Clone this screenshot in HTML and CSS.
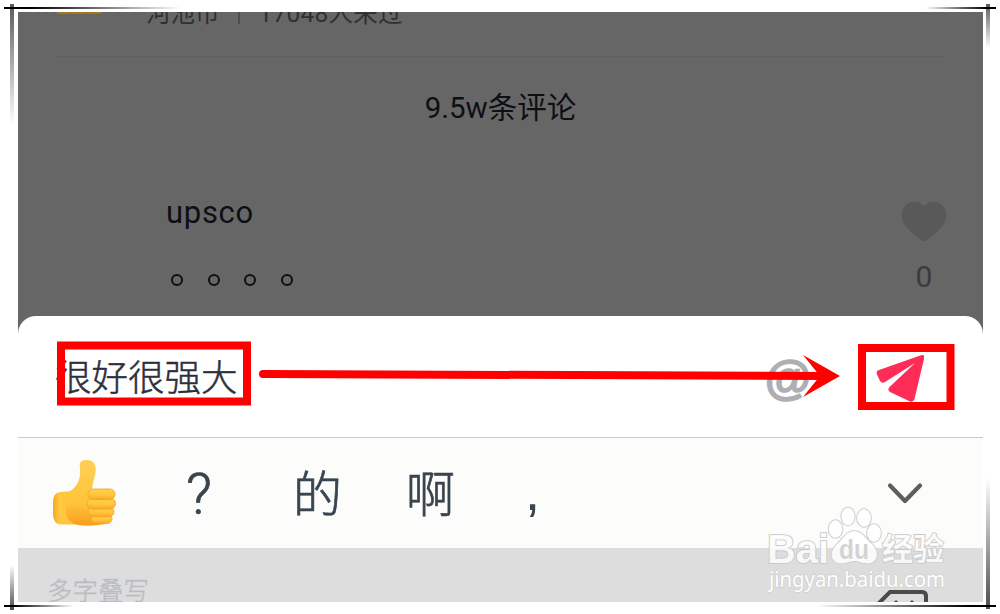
FILE: index.html
```html
<!DOCTYPE html>
<html lang="zh-CN">
<head>
<meta charset="UTF-8">
<meta name="viewport" content="width=device-width, initial-scale=1.0">
<link rel="stylesheet" href="styles.css">
<title>评论</title>
</head>
<body>
<div class="frame">
<div class="screen">

<div class="comments">
<div class="place">
<span class="badge"></span>
<span class="place-name">河池市</span>
<span class="bar"></span>
<span class="place-count">17048人来过</span>
</div>
<h2 class="total">9.5w条评论</h2>
<div class="comment">
<div class="comment-body">
<p class="user">upsco</p>
<p class="dots"><i></i><i></i><i></i><i></i></p>
</div>
<div class="like">
<svg width="46" height="42" viewBox="0 0 46 42"><path d="M23 5C18 0 9 -1 4 5C-1 11 0 19 4 24C8 30 14 34 20 39Q23 41.500 26 39C32 34 38 30 42 24C46 19 47 11 42 5C37 -1 28 0 23 5Z" fill="#595959"/></svg>
<span>0</span>
</div>
</div>
</div>

<div class="sheet">
<div class="message">很好很强大</div>
<span class="at">@</span>
<svg class="send" width="50" height="50" viewBox="0 0 50 50"><path d="M5 17L47 2.200Q51.500 1 50 6L40.500 46Q39 50 35 48L16 39Q13 37 15.500 34L41 10L11 29Q8 31 6 28L2.800 21Q2 18 5 17Z" fill="#ff2c58"/></svg>
</div>

<div class="suggest">
<svg class="thumb" width="66" height="68" viewBox="0 0 66 68">
<defs>
<linearGradient id="skin" x1="0" y1="0" x2="0" y2="1"><stop offset="0" stop-color="#ffcf55"/><stop offset=".65" stop-color="#ffc43a"/><stop offset="1" stop-color="#f99c20"/></linearGradient>
<linearGradient id="wrist" x1="0" y1="0" x2="1" y2="0"><stop offset="0" stop-color="#f9a51f"/><stop offset=".3" stop-color="#ffc942"/><stop offset="1" stop-color="#ffc03a"/></linearGradient>
<linearGradient id="finger" x1="0" y1="0" x2="0" y2="1"><stop offset="0" stop-color="#ffd050"/><stop offset=".6" stop-color="#ffc53a"/><stop offset="1" stop-color="#fba828"/></linearGradient>
</defs>
<path d="M8 33Q1 34 1 43V55Q1 65 9 65.500H23V32Z" fill="url(#wrist)"/>
<path d="M14 35C24 29 29 22 28 10C27 3 29 1 35 1C43 1 45 8 43 16C41 24 40 28 40 31L51 34L53 65Q38 68 26 66Q16 64 14 54Z" fill="url(#skin)"/>
<g fill="url(#finger)" stroke="#f5a024" stroke-width=".8">
<rect x="39" y="55" width="21" height="9.500" rx="4.700"/>
<rect x="36" y="48" width="26" height="9.500" rx="4.700"/>
<rect x="35" y="39" width="28.500" height="11" rx="5.500"/>
<rect x="36" y="30" width="27" height="10.500" rx="5.200"/>
</g>
</svg>
<span class="word q">?</span>
<span class="word de">的</span>
<span class="word a">啊</span>
<span class="word comma">,</span>
<svg class="chevron" width="36" height="22" viewBox="0 0 36 22"><path d="M3 3.500L18 19L33 3.500" fill="none" stroke="#5e5e5e" stroke-width="4.200" stroke-linecap="round" stroke-linejoin="round"/></svg>
</div>

<div class="keyboard">
<span class="hint">多字叠写</span>
<svg class="backspace" width="54" height="28" viewBox="0 0 54 28"><path d="M2 17L14 5H46Q50 5 50 9V26" fill="none" stroke="#4b4b4b" stroke-width="4"/><path d="M19 14L29 24M37 14L27 24" stroke="#4b4b4b" stroke-width="3"/></svg>
</div>
</div>

<!-- arrow and boxes over the screen -->
<svg class="marks" width="1000" height="614" viewBox="0 0 1000 614">
<defs>
<linearGradient id="right"><stop offset="0"/><stop offset=".15"/><stop offset="1" stop-opacity="0"/></linearGradient>
<linearGradient id="left"><stop offset="0" stop-opacity="0"/><stop offset=".85"/><stop offset="1"/></linearGradient>
<linearGradient id="down" x1="0" y1="0" x2="0" y2="1"><stop offset="0" stop-opacity=".65"/><stop offset="1" stop-opacity="0"/></linearGradient>
<linearGradient id="up" x1="0" y1="0" x2="0" y2="1"><stop offset="0" stop-opacity="0"/><stop offset="1" stop-opacity=".7"/></linearGradient>
</defs>
<rect x="4" y="7" width="178" height="2" fill="url(#right)"/>
<rect x="10" y="4" width="4" height="120" fill="url(#down)"/>
<rect x="925" y="7" width="71" height="2" fill="url(#left)"/>
<rect x="986" y="4" width="4" height="44" fill="url(#down)"/>
<rect x="4" y="605" width="70" height="2" fill="url(#right)"/>
<rect x="10" y="565" width="4" height="45" fill="url(#up)"/>
<rect x="815" y="605" width="181" height="2" fill="url(#left)"/>
<rect x="986" y="478" width="4" height="131" fill="url(#up)"/>

<g fill="none" stroke="#f00" stroke-width="8">
<rect x="61" y="345.500" width="186" height="56"/>
<rect x="862" y="348" width="88.500" height="58"/>
<path d="M263 374L825 376" stroke-linecap="round"/>
</g>
<path d="M803 355L840 376L803 397L820 376Z" fill="#f00"/>

<g class="watermark">
<ellipse cx="835.500" cy="529" rx="7" ry="9"/>
<ellipse cx="848" cy="516.500" rx="6.800" ry="9"/>
<ellipse cx="864" cy="518" rx="7" ry="9"/>
<ellipse cx="874" cy="533" rx="7" ry="9"/>
<path d="M854 531C862 531 865 538 872 544C881 553 877 564 867 563.500C861 563 858 561 854 561C849 561 846 564 841 563.500C831 563 828 553 837 544C844 538 846 531 854 531Z"/>
<text class="bai" x="767" y="563" textLength="62" lengthAdjust="spacingAndGlyphs">Bai</text>
<text class="du" x="839" y="558.500" textLength="30" lengthAdjust="spacingAndGlyphs">du</text>
<text class="jing" x="882" y="560">经验</text>
<text class="url" x="769" y="587" textLength="176" lengthAdjust="spacingAndGlyphs">jingyan.baidu.com</text>
</g>
</svg>
</div>
</body>
</html>
```
FILE: styles.css
```css
* {
    box-sizing: border-box;
}
body {
    margin: 0;
    background: #fff;
    font-family: Roboto, "Noto Sans CJK SC", sans-serif;
}
p, h2 {
    margin: 0;
    font-weight: 400;
}
svg {
    display: block;
    flex-shrink: 0;
}
.frame {
    position: relative;
    height: 614px;
    padding: 12px 17px 12px 18px;
    overflow: hidden;
}
.screen {
    height: 590px;
    background: #666;
    overflow: hidden;
}

.comments {
    height: 304px;
    padding: 0 37px;
}
.place {
    display: flex;
    height: 45px;
    border-bottom: 1px solid #606060;
    color: #303030;
    font-size: 24.5px;
    line-height: 36px;
}
.place-name, .place-count {
    margin-top: -16px;
}
.badge {
    width: 45px;
    height: 2px;
    margin: 0 44px 0 2px;
    background: #a2761a;
    border-radius: 0 0 4px 4px;
}
.bar {
    width: 2px;
    height: 12px;
    margin: 0 19px 0 18px;
    background: #4d4d4d;
}
.place-count {
    letter-spacing: 0.25px;
}
.total {
    margin-top: 30px;
    color: #0e0f14;
    font-size: 29.5px;
    line-height: 42px;
    text-align: center;
}
.comment {
    display: flex;
    justify-content: space-between;
    padding: 65px 0 0 111px;
}
.user {
    color: #0e0f14;
    font-size: 31px;
    line-height: 38px;
    letter-spacing: 0.7px;
}
.dots {
    display: flex;
    gap: 24.6px;
    margin: 42px 0 0 5px;
}
.dots i {
    width: 12px;
    height: 12px;
    border: 2px solid #0e0f14;
    border-radius: 50%;
}
.like {
    display: flex;
    flex-direction: column;
    align-items: center;
    padding-top: 7px;
    margin-right: -1px;
    color: #3b3b3b;
    font-size: 30px;
    line-height: 36px;
}
.like span {
    margin-top: 16px;
}

.sheet {
    display: flex;
    align-items: center;
    height: 122px;
    padding: 2px 59px 0 37px;
    background: #fff;
    border-radius: 18px 18px 0 0;
    border-bottom: 1px solid #c6cacd;
}
.message {
    flex: 1;
    margin-top: -4px;
    color: #2d303c;
    font-family: "Noto Sans CJK SC", sans-serif;
    font-size: 36.5px;
    font-weight: 300;
    -webkit-text-stroke: 0.5px #2d303c;
}
.at {
    width: 47px;
    margin-right: 62px;
    color: #adafb3;
    font: bold 47px/50px "Liberation Sans", sans-serif;
    -webkit-text-stroke: 1.6px #adafb3;
}

.suggest {
    display: flex;
    align-items: center;
    height: 110px;
    padding: 0 60px 0 34px;
    background: #fcfcfa;
    color: #394450;
}
.word {
    margin-top: -4px;
    font-family: "Noto Sans CJK SC", sans-serif;
    font-size: 49px;
    font-weight: 300;
    line-height: 60px;
    -webkit-text-stroke: 0.7px #394450;
}
.q {
    width: 107px;
    margin-top: 4px;
    margin-left: 68px;
    font-family: Roboto, sans-serif;
    font-size: 57px;
}
.de, .a {
    width: 113px;
}
.comma {
    margin-left: 6px;
    font-family: "Liberation Sans", sans-serif;
    font-size: 54px;
    -webkit-text-stroke: 0;
}
.chevron {
    margin-left: auto;
}

.keyboard {
    display: flex;
    justify-content: space-between;
    height: 54px;
    padding: 25px 53px 0 29px;
    background: #ddd;
}
.hint {
    color: #b9bdc3;
    font-family: "Noto Sans CJK SC", sans-serif;
    font-size: 25.5px;
    font-weight: 300;
    line-height: 32px;
    -webkit-text-stroke: 0.4px #b9bdc3;
}
.backspace {
    margin-top: 14px;
}

.marks {
    position: absolute;
    top: 0;
    left: 0;
}
.watermark {
    fill: #fff;
    fill-opacity: .85;
    stroke: #c8c8c8;
    stroke-width: 1.6px;
    paint-order: stroke;
}
.bai {
    font: bold 40px "Liberation Sans", sans-serif;
}
.du {
    fill: #ccc;
    stroke: none;
    font: bold 27px "Liberation Sans", sans-serif;
}
.jing {
    font: bold 31px "Noto Sans CJK SC", sans-serif;
}
.url {
    font: 21px "Noto Sans", sans-serif;
    fill-opacity: 1;
    stroke-width: 1px;
}
```
